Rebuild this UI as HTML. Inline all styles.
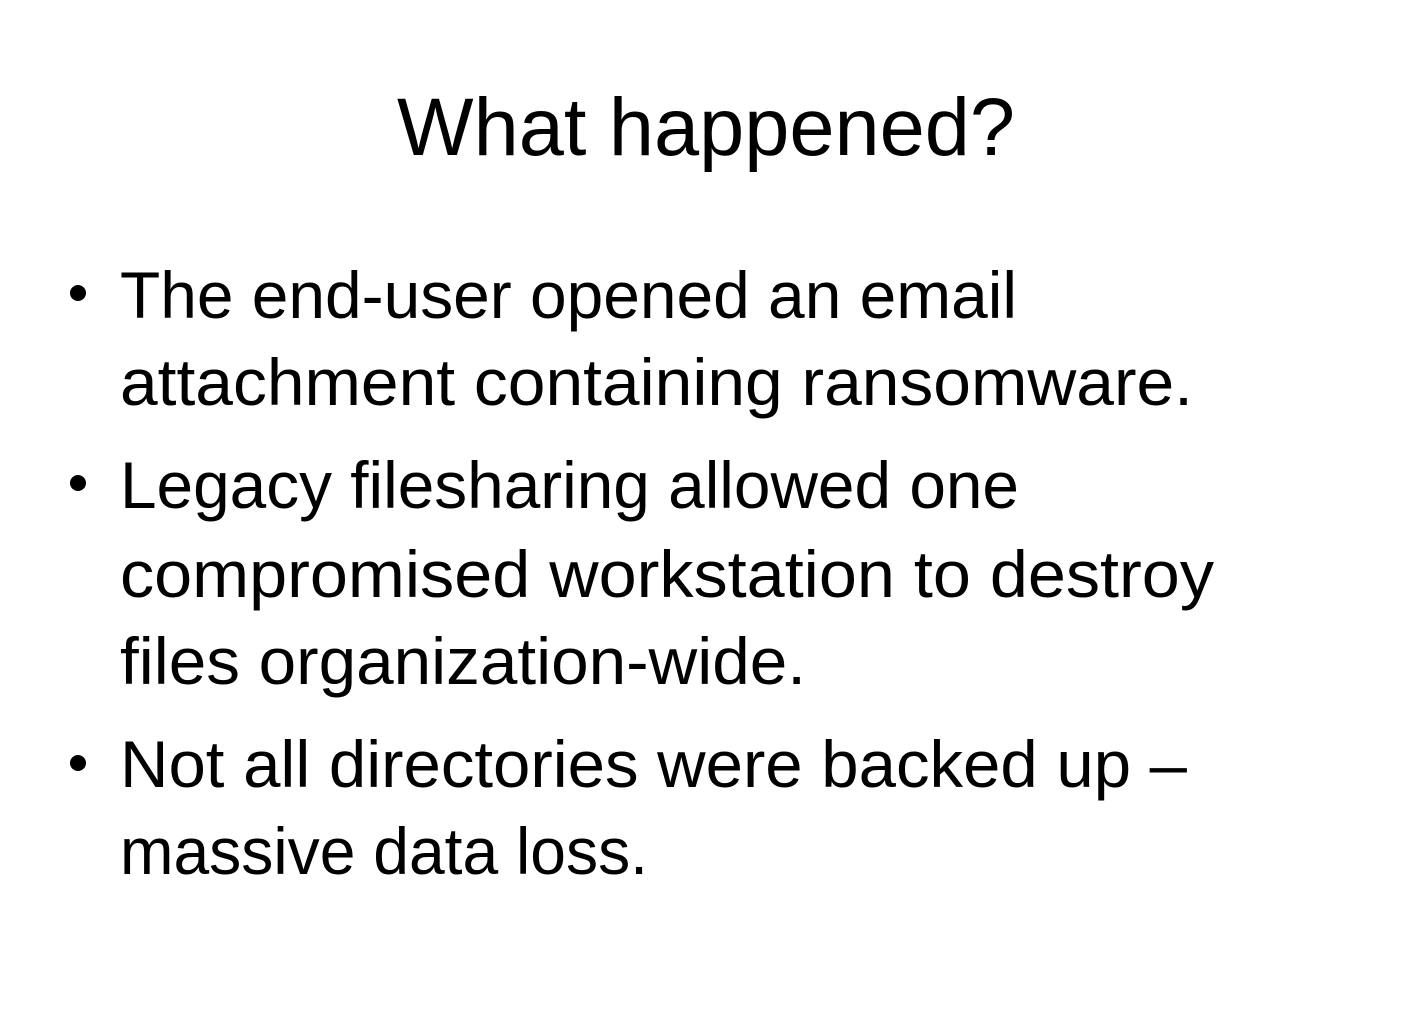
<!DOCTYPE html>
<html><head><meta charset="utf-8"><style>
html,body{margin:0;padding:0;background:#fff;width:1402px;height:1023px;overflow:hidden}
svg{display:block}
text{font-family:"Liberation Sans",sans-serif;fill:#000}
</style></head><body>
<svg width="1402" height="1023" viewBox="0 0 1402 1023" xmlns="http://www.w3.org/2000/svg">
<text x="397" y="155" font-size="82" textLength="618" lengthAdjust="spacingAndGlyphs">What happened?</text>
<circle cx="78" cy="293" r="8" fill="#000"/>
<circle cx="78" cy="483" r="8" fill="#000"/>
<circle cx="78" cy="763" r="8" fill="#000"/>
<g font-size="66">
<text x="120" y="318" textLength="897" lengthAdjust="spacingAndGlyphs">The end-user opened an email</text>
<text x="120" y="405" textLength="1073" lengthAdjust="spacingAndGlyphs">attachment containing ransomware.</text>
<text x="120" y="508" textLength="899" lengthAdjust="spacingAndGlyphs">Legacy filesharing allowed one</text>
<text x="120" y="597" textLength="1094" lengthAdjust="spacingAndGlyphs">compromised workstation to destroy</text>
<text x="120" y="684" textLength="686" lengthAdjust="spacingAndGlyphs">files organization-wide.</text>
<text x="120" y="787" textLength="1067" lengthAdjust="spacingAndGlyphs">Not all directories were backed up –</text>
<text x="120" y="874" textLength="528" lengthAdjust="spacingAndGlyphs">massive data loss.</text>
</g>
</svg>
</body></html>
